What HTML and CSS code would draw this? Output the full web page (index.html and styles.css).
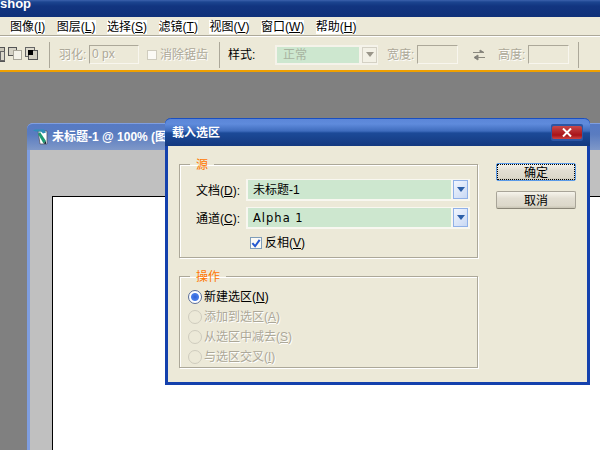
FILE: index.html
```html
<!DOCTYPE html>
<html lang="zh">
<head>
<meta charset="utf-8">
<title>载入选区</title>
<link rel="stylesheet" href="styles.css">
</head>
<body>
<div class="app">
  <header class="app-title">shop</header>
  <nav class="menubar">
    <span class="menu-item">图像(<u>I</u>)</span>
    <span class="menu-item">图层(<u>L</u>)</span>
    <span class="menu-item">选择(<u>S</u>)</span>
    <span class="menu-item">滤镜(<u>T</u>)</span>
    <span class="menu-item">视图(<u>V</u>)</span>
    <span class="menu-item">窗口(<u>W</u>)</span>
    <span class="menu-item">帮助(<u>H</u>)</span>
  </nav>
  <div class="toolbar">
    <svg class="tool-icons" width="39" height="19" viewBox="0 0 39 19">
      <rect x="-4.500" y="2.500" width="9" height="14" fill="#c9c6b8" stroke="#555"/>
      <rect x="0.500" y="6.500" width="4" height="9" fill="#dcd9cc" stroke="#666"/>
      <rect x="8.500" y="2.500" width="8" height="8" fill="#d6d3c6" stroke="#555"/>
      <rect x="13.500" y="5.500" width="8" height="9" fill="#f4f2e8" stroke="#aaa79a"/>
      <rect x="25.500" y="2.500" width="9" height="9" fill="#dedbce" stroke="#666"/>
      <rect x="28.500" y="5.500" width="9" height="9" fill="#d4d1c3" stroke="#555"/>
      <rect x="28" y="5" width="5" height="5" fill="#000"/>
    </svg>
    <span class="tb-sep first-sep"></span>
    <span class="tb-label disabled feather-label">羽化:</span>
    <span class="tb-input feather-input disabled">0 px</span>
    <span class="tb-check"></span>
    <span class="tb-label disabled aa-label">消除锯齿</span>
    <span class="tb-sep aa-sep"></span>
    <span class="tb-label style-label">样式:</span>
    <span class="tb-select">
      <span class="tb-select-value">正常</span>
      <span class="tb-select-btn"><svg width="8" height="5" viewBox="0 0 8 5"><path d="M0 0h8L4 5z" fill="#9a968a"/></svg></span>
    </span>
    <span class="tb-label disabled width-label">宽度:</span>
    <span class="tb-input size-input"></span>
    <svg class="swap" width="14" height="12" viewBox="0 0 14 12">
      <path d="M1 3.500h9M8 1l4 2.500H8zM13 8.500H4M6 6L2 8.500 6 11z" fill="#777" stroke="#8a887e"/>
    </svg>
    <span class="tb-label disabled height-label">高度:</span>
    <span class="tb-input size-input"></span>
    <span class="tb-sep end-sep"></span>
  </div>
  <main class="workspace">
    <section class="doc-window">
      <div class="doc-title">
        <svg class="doc-icon" width="16" height="18" viewBox="0 0 16 18">
          <path d="M5 3h9v13H7z" fill="#fff" stroke="#556" stroke-width=".8"/>
          <path d="M0 2.500l2-1h9l2 3-3 1-2-2H3z" fill="#2f8fb8"/>
          <path d="M7 4l6 9-2.500 2.500L5 6z" fill="#1f9a72"/>
          <path d="M10.500 15.500l2.500-2.500v3z" fill="#123"/>
        </svg>
        <span class="doc-title-text">未标题-1 @ 100% (图层 1, RGB/8)</span>
      </div>
      <div class="doc-body">
        <div class="canvas"></div>
      </div>
    </section>
    <section class="dialog">
      <div class="dialog-title">
        <span class="dialog-title-text">载入选区</span>
        <span class="close-frame"><span class="close-btn"><svg width="10" height="9" viewBox="0 0 10 9"><path d="M1 .5l8 8M9 .5l-8 8" stroke="#fff" stroke-width="2"/></svg></span></span>
      </div>
      <div class="dialog-body">
        <div class="dialog-main">
          <fieldset class="group source-group">
            <legend><span class="txt">源</span></legend>
            <div class="field-row">
              <span class="field-label txt">文档(<u>D</u>):</span>
              <span class="combo"><span class="combo-value txt">未标题-1</span><span class="combo-btn"><svg width="8" height="5" viewBox="0 0 8 5"><path d="M0 0h8L4 5z" fill="#2c5fa8"/></svg></span></span>
            </div>
            <div class="field-row">
              <span class="field-label txt">通道(<u>C</u>):</span>
              <span class="combo"><span class="combo-value combo-latin txt">Alpha 1</span><span class="combo-btn"><svg width="8" height="5" viewBox="0 0 8 5"><path d="M0 0h8L4 5z" fill="#2c5fa8"/></svg></span></span>
            </div>
            <div class="check-row">
              <span class="checkbox"><svg width="11" height="11" viewBox="0 0 11 11"><path d="M1.500 5l3 3.500L9.500 1.500" fill="none" stroke="#2458d0" stroke-width="2.200"/></svg></span>
              <span>反相(<u>V</u>)</span>
            </div>
          </fieldset>
          <fieldset class="group op-group">
            <legend><span class="txt">操作</span></legend>
            <div class="radio-row"><span class="radio checked"></span><span>新建选区(<u>N</u>)</span></div>
            <div class="radio-row disabled"><span class="radio"></span><span>添加到选区(<u>A</u>)</span></div>
            <div class="radio-row disabled"><span class="radio"></span><span>从选区中减去(<u>S</u>)</span></div>
            <div class="radio-row disabled"><span class="radio"></span><span>与选区交叉(<u>I</u>)</span></div>
          </fieldset>
        </div>
        <div class="dialog-actions">
          <button class="btn btn-default" type="button"><span class="txt">确定</span></button>
          <button class="btn" type="button"><span class="txt">取消</span></button>
        </div>
      </div>
    </section>
  </main>
</div>
</body>
</html>
```

FILE: styles.css
```css
* { box-sizing: border-box; }
html, body { margin: 0; padding: 0; }
body {
  width: 600px;
  height: 450px;
  overflow: hidden;
  font: 12px/14px "Liberation Sans", "Noto Sans CJK SC", sans-serif;
  color: #000;
  background: #808080;
}
u { text-decoration: underline; }
.txt { display: inline-block; padding-top: 1px; }
.app { display: flex; flex-direction: column; width: 600px; height: 450px; overflow: hidden; }

.app-title {
  height: 17px;
  flex: none;
  color: #fff;
  font-weight: bold;
  font-size: 13px;
  line-height: 7px;
  background: linear-gradient(#3c62ad 0, #1c4590 2px, #123580 6px, #0f3078 100%);
}

.menubar {
  height: 19px;
  flex: none;
  display: flex;
  gap: 11.500px;
  align-items: center;
  padding: 0 0 0 10px;
  background: #ece9d8;
}
.menu-item { background: #fff; line-height: 14px; white-space: nowrap; }

.toolbar {
  height: 36px;
  flex: none;
  display: flex;
  align-items: center;
  background: #ece9d8;
  border-top: 1px solid #fff;
  border-bottom: 2px solid #f0a000;
  padding-top: 2px;
  box-shadow: 0 -1px 0 #aca899;
}
.tool-icons { flex: none; margin-right: 10px; }
.tb-sep { width: 1px; height: 26px; background: #aca899; flex: none; }
.tb-label { flex: none; white-space: nowrap; padding-top: 1px; }
.disabled { color: #aca899; text-shadow: 1px 1px 0 #fff; }
.feather-label { margin-left: 9px; width: 30px; }
.tb-input {
  flex: none;
  height: 19px;
  border: 1px solid #aca899;
  border-right-color: #f8f6ee;
  border-bottom-color: #f8f6ee;
  background: #ece9d8;
  padding-left: 2px;
  line-height: 17px;
}
.feather-input { width: 50px; }
.tb-check { flex: none; width: 10px; height: 10px; background: #fbfaf5; border: 1px solid #cfccbe; margin-left: 8px; margin-right: 3px; }
.aa-label { width: 48px; }
.aa-sep { margin-left: 11px; }
.style-label { margin-left: 8px; width: 47px; }
.tb-select {
  flex: none;
  display: flex;
  width: 103px;
  height: 20px;
  padding: 1px;
  background: #f5f3ea;
  gap: 3px;
}
.tb-select-value {
  flex: 1;
  padding: 0 0 0 6px;
  background: #cde7cf;
  color: #a8b3a0;
  line-height: 17px;
  height: 16px;
  margin-top: 1px;
  margin-left: 1px;
}
.tb-select-btn {
  flex: none;
  width: 15px;
  height: 16px;
  margin-top: 1px;
  display: flex;
  align-items: center;
  justify-content: center;
  background: #f3f1e6;
  border: 1px solid #d4d1c4;
}
.width-label { margin-left: 9px; width: 30px; }
.size-input { width: 41px; }
.swap { flex: none; margin-left: 14px; margin-right: 12px; }
.height-label { width: 30px; }
.end-sep { margin-left: 9px; }

.workspace { flex: 1; position: relative; background: #808080; overflow: hidden; }

.doc-window {
  position: absolute;
  left: 27px;
  top: 51px;
  width: 640px;
  height: 400px;
  border: 3px solid #7f9ee0;
  border-top: 0;
  border-radius: 6px 6px 0 0;
  background: #c0c0c0;
  display: flex;
  flex-direction: column;
}
.doc-title {
  height: 27px;
  flex: none;
  margin: 0 -3px;
  padding-left: 6px;
  display: flex;
  align-items: center;
  gap: 3px;
  color: #fff;
  font-weight: bold;
  border-radius: 6px 6px 0 0;
  border-top: 1px solid #7f9ee0;
  background: linear-gradient(#567ac4 0, #5a7cc0 40%, #7f98c8 100%);
}
.doc-icon { flex: none; }
.doc-title-text { white-space: nowrap; }
.doc-body { flex: 1; padding: 46px 0 0 22px; }
.canvas { height: 100%; background: #fff; border-top: 1px solid #000; border-left: 1px solid #000; }

.dialog {
  position: absolute;
  left: 165px;
  top: 46px;
  width: 425px;
  height: 267px;
  display: flex;
  flex-direction: column;
  background: #ece9d8;
  border: 3px solid #1441ad;
  border-top: 0;
  border-radius: 6px 6px 0 0;
}
.dialog-title {
  height: 28px;
  flex: none;
  margin: 0 -3px;
  padding: 0 7px 0 7px;
  display: flex;
  align-items: center;
  justify-content: space-between;
  color: #fff;
  font-weight: bold;
  border-radius: 6px 6px 0 0;
  border-top: 1px solid #1a4fc0;
  background: linear-gradient(#5b86d8 0, #5f8bdc 5px, #3f6cbd 12px, #1c4a98 14px, #14397f 100%);
}
.close-frame { padding: 2px 1px; background: #2c56a4; border-radius: 2px; display: flex; }
.close-btn {
  width: 30px;
  height: 13px;
  background: linear-gradient(#c9484a, #a81418 70%, #c44);
  border-radius: 2px;
  display: flex;
  align-items: center;
  justify-content: center;
}
.dialog-body { flex: 1; display: flex; padding: 11px 14px 0 11px; }
.dialog-main { width: 299px; flex: none; display: flex; flex-direction: column; gap: 11px; }
.group {
  margin: 0;
  min-width: 0;
  border: 1px solid #aca899;
  box-shadow: 1px 1px 0 #fff, inset 1px 1px 0 #fff;
}
.group legend { padding: 0 6px; color: #f70; line-height: 14px; }
.source-group legend { margin-left: -6px; }
.op-group legend { margin-left: 2px; }
.source-group { height: 101px; padding: 7px 6px 0 16px; }
.op-group { height: 99px; padding: 3px 6px 0 8px; }
.field-row { display: flex; align-items: center; height: 22px; margin-bottom: 6px; }
.field-label { width: 50px; flex: none; white-space: nowrap; }
.combo { width: 224px; height: 22px; flex: none; display: flex; padding: 1px 2px 2px 2px; background: #f8f7f0; }
.combo-value { flex: 1; background: #cde7cf; padding-left: 5px; padding-top: 0; line-height: 20px; }
.combo-latin { font-family: "DejaVu Sans", sans-serif; letter-spacing: 1px; font-size: 11.500px; }
.combo-btn {
  flex: none;
  width: 15px;
  margin-left: 2px;
  display: flex;
  align-items: center;
  justify-content: center;
  border: 1px solid #8fb0e8;
  background: linear-gradient(135deg, #f2f6fe, #c8d8f4);
}
.check-row { display: flex; align-items: center; height: 16px; padding-left: 54px; gap: 3px; }
.checkbox { width: 12px; height: 12px; flex: none; border: 1px solid #7f9db9; background: #fbfaf5; display: flex; }
.radio-row { display: flex; align-items: center; height: 20px; gap: 2px; white-space: nowrap; }
.radio {
  width: 14px;
  height: 14px;
  flex: none;
  border-radius: 50%;
  border: 1px solid #cfccbe;
  background: #ece9d8;
}
.radio.checked {
  border-color: #5a6e9a;
  background: radial-gradient(circle, #2f62d8 0, #4a7fe8 3.500px, #fff 4.500px, #fff 100%);
}
.dialog-actions { margin-left: 18px; padding-top: 6px; display: flex; flex-direction: column; gap: 10px; }
.btn {
  width: 80px;
  height: 18px;
  padding: 0;
  font: inherit;
  color: #000;
  border: 1px solid #a8a498;
  border-bottom-color: #8a8678;
  border-radius: 2px;
  background: linear-gradient(#f6f4ec, #e2ded2 40%, #dcd8ca 85%, #c8c4b4);
}
.btn-default {
  border-color: #5a9ae8;
  outline: 1px dotted #000;
  outline-offset: -2px;
}
```
